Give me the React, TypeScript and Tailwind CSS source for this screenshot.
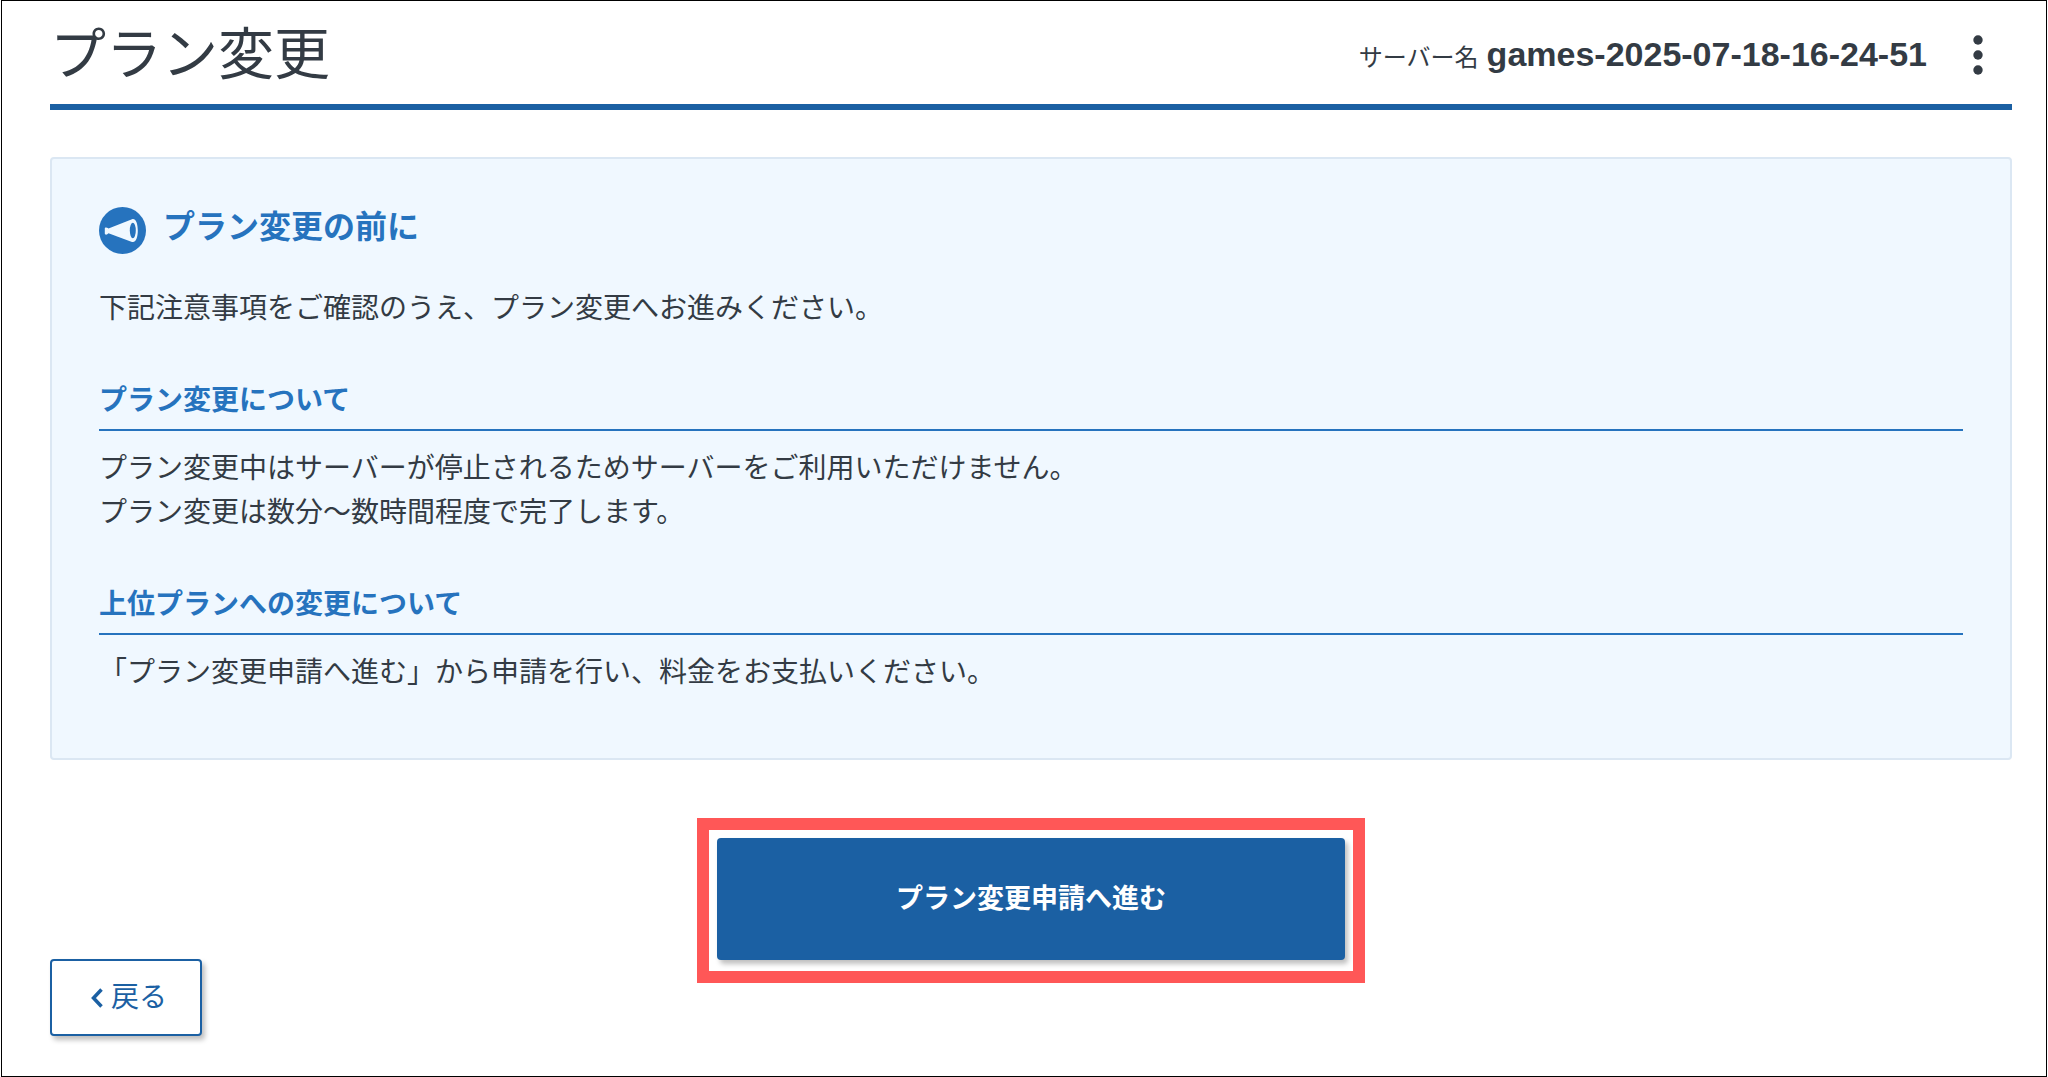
import { ReactNode } from "react";

function Section({ title, children }: { title: string; children: ReactNode }) {
  return (
    <section className="mt-12">
      <h3 className="border-b-2 border-[#2673be] pb-1.5 text-[28px] leading-11 font-bold text-[#2673be]">{title}</h3>
      <div className="mt-4 text-[28px] leading-11">{children}</div>
    </section>
  );
}

export default function App() {
  return (
    <div className="mx-px min-h-screen border border-black bg-white pr-[34px] pl-12 font-['Liberation_Sans','Noto_Sans_CJK_JP',sans-serif] text-[#333b44]">
      <header className="flex h-[109px] items-center justify-between border-b-6 border-[#1b60a3] pt-1">
        <h1 className="text-[56px]">プラン変更</h1>
        <div className="flex items-center">
          <p className="flex items-baseline gap-2">
            <span className="text-[24px]">サーバー名</span>
            <strong className="text-[34px] font-bold">games-2025-07-18-16-24-51</strong>
          </p>
          <button type="button" aria-label="メニュー" className="mr-2.5 ml-[27px] flex w-12 justify-center">
            <svg width="10" height="40" viewBox="0 0 10 40" fill="currentColor">
              <circle cx="5" cy="5" r="4.7" />
              <circle cx="5" cy="20" r="4.7" />
              <circle cx="5" cy="35" r="4.7" />
            </svg>
          </button>
        </div>
      </header>
      <main>
        <section className="mt-[47px] rounded border-2 border-[#dbe7f3] bg-[#f0f8ff] px-[47px] pt-12 pb-[63px]">
          <h2 className="flex items-start gap-4 text-[32px] leading-10 font-bold text-[#2673be]">
            <svg width="48" height="48" viewBox="0 0 48 48">
              <circle cx="23.500" cy="23.500" r="23.500" fill="#2673be" />
              <path
                d="M5.800 21.500 C5.800 20 8 20.300 9.500 21.500 L33 12.200 C37 11 38.800 17 38.800 23.500 C38.800 30 37 36 33 34.900 L9.500 26.300 C8 28.200 5.800 28 5.800 26.500 Z"
                fill="#f0f8ff"
              />
              <ellipse cx="33.800" cy="23.500" rx="3" ry="7.800" fill="#2673be" />
            </svg>
            プラン変更の前に
          </h2>
          <p className="mt-8 text-[28px] leading-11">下記注意事項をご確認のうえ、プラン変更へお進みください。</p>
          <Section title="プラン変更について">
            <p>プラン変更中はサーバーが停止されるためサーバーをご利用いただけません。</p>
            <p>プラン変更は数分〜数時間程度で完了します。</p>
          </Section>
          <Section title="上位プランへの変更について">
            <p>「プラン変更申請へ進む」から申請を行い、料金をお支払いください。</p>
          </Section>
        </section>
        <div className="mx-auto mt-[58px] w-fit border-12 border-[#ff5757] px-2 pt-2 pb-[11px]">
          <button
            type="button"
            className="h-[122px] w-[628px] rounded bg-[#1b60a3] text-[27px] font-bold text-white shadow-[3px_4px_5px_rgba(0,0,0,0.25)]"
          >
            プラン変更申請へ進む
          </button>
        </div>
        <button
          type="button"
          className="-mt-6 mb-10 flex h-[77px] w-[152px] items-center justify-center gap-2 rounded border-2 border-[#1b60a3] bg-white pl-1.5 text-[28px] text-[#1b60a3] shadow-[3px_4px_5px_rgba(0,0,0,0.25)]"
        >
          <svg width="12" height="20" viewBox="0 0 12 20" fill="none" stroke="currentColor" strokeWidth="3.500">
            <path d="M10.500 1.500 L2.500 10 L10.500 18.500" />
          </svg>
          戻る
        </button>
      </main>
    </div>
  );
}
